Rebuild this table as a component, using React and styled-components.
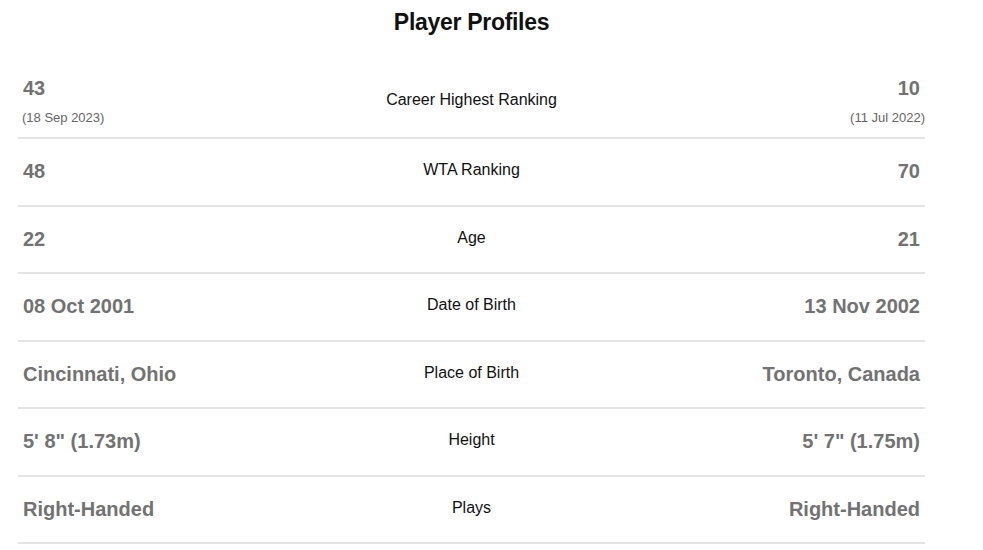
import React from "react";
import styled, { createGlobalStyle } from "styled-components";

const Global = createGlobalStyle`
  html, body { margin: 0; padding: 0; background: #fff; }
  body { font-family: "Liberation Sans", Arial, Helvetica, sans-serif; }
`;

const Wrap = styled.section`
  width: 907px;
  margin-left: 18px;
`;

const Title = styled.h2`
  margin: 0;
  padding-top: 9px;
  height: 56px;
  font-size: 23px;
  line-height: 26px;
  font-weight: 700;
  color: #111;
  text-align: center;
  letter-spacing: -0.3px;
`;

const Row = styled.div`
  display: grid;
  grid-template-columns: 1fr 1fr 1fr;
  align-items: center;
  min-height: ${(p) => (p.$tall ? "72px" : "65.5px")};
  border-bottom: 2px solid #e4e4e4;
  padding: 0 5px;
`;

const Side = styled.div`
  display: flex;
  flex-direction: column;
  align-items: ${(p) => (p.$right ? "flex-end" : "flex-start")};
  text-align: ${(p) => (p.$right ? "right" : "left")};
  gap: 10px;
`;

const Value = styled.div`
  font-size: 20px;
  line-height: 23px;
  font-weight: 700;
  color: #727272;
  white-space: nowrap;
`;

const Sub = styled.div`
  font-size: 13px;
  line-height: 15px;
  color: #666;
  margin: ${(p) => (p.$right ? "0 -5px 0 0" : "0 0 0 -1px")};
`;

const Label = styled.div`
  font-size: 16px;
  line-height: 18px;
  padding-bottom: 3px;
  color: #111;
  text-align: center;
  white-space: nowrap;
`;

const rows = [
  { label: "Career Highest Ranking", l: "43", ls: "(18 Sep 2023)", r: "10", rs: "(11 Jul 2022)" },
  { label: "WTA Ranking", l: "48", r: "70" },
  { label: "Age", l: "22", r: "21" },
  { label: "Date of Birth", l: "08 Oct 2001", r: "13 Nov 2002" },
  { label: "Place of Birth", l: "Cincinnati, Ohio", r: "Toronto, Canada" },
  { label: "Height", l: "5' 8\" (1.73m)", r: "5' 7\" (1.75m)" },
  { label: "Plays", l: "Right-Handed", r: "Right-Handed" },
];

export default function App() {
  return (
    <>
      <Global />
      <Wrap>
        <Title>Player Profiles</Title>
        {rows.map((row) => (
          <Row key={row.label} $tall={!!row.ls}>
            <Side>
              <Value>{row.l}</Value>
              {row.ls && <Sub>{row.ls}</Sub>}
            </Side>
            <Label>{row.label}</Label>
            <Side $right>
              <Value>{row.r}</Value>
              {row.rs && <Sub $right>{row.rs}</Sub>}
            </Side>
          </Row>
        ))}
      </Wrap>
    </>
  );
}
